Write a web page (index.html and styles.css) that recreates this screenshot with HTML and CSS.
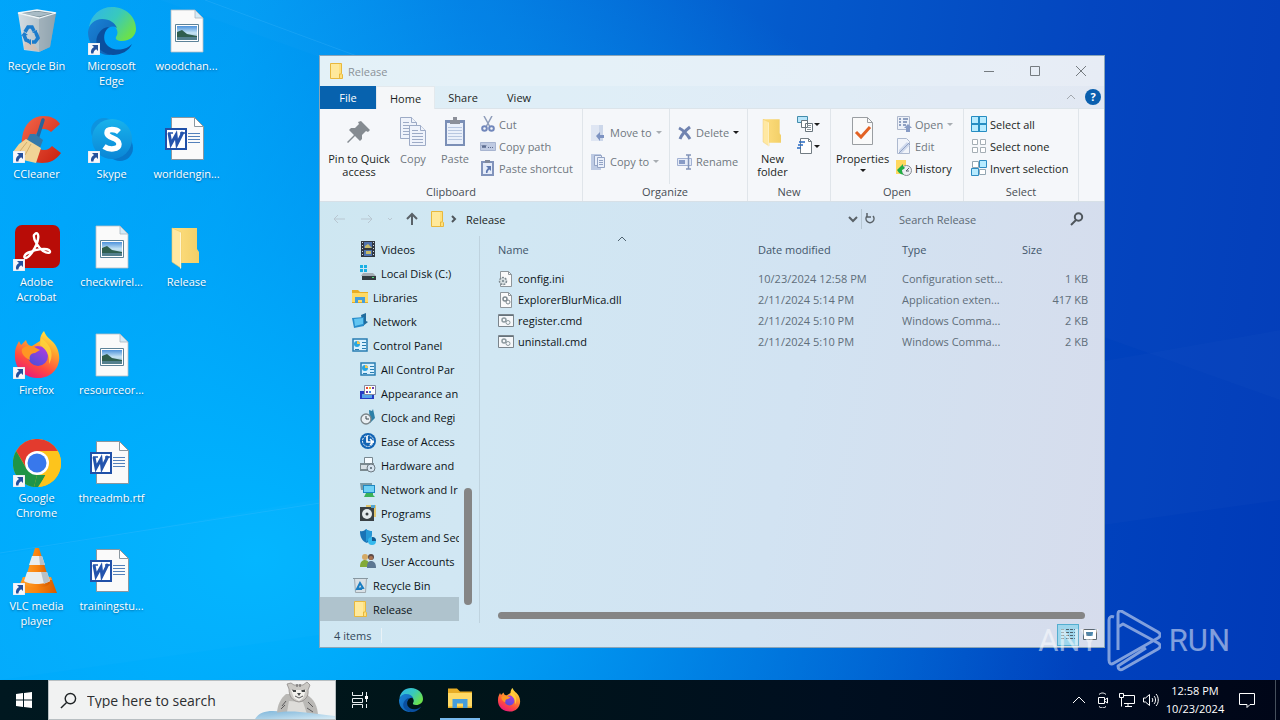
FILE: index.html
```html
<!DOCTYPE html>
<html lang="en">
<head>
<meta charset="utf-8">
<meta name="viewport" content="width=device-width, initial-scale=1">
<title>Release</title>
<link rel="stylesheet" href="styles.css">
</head>
<body>
<svg class="sprite" width="0" height="0" aria-hidden="true">
  <defs>
    <linearGradient id="g-bin" x1="0" x2="1"><stop offset="0" stop-color="#d3dde3"/><stop offset=".6" stop-color="#b5c3ca"/><stop offset="1" stop-color="#76909c"/></linearGradient>
    <linearGradient id="g-edge1" x1="0" y1="0" x2="1" y2=".6"><stop offset="0" stop-color="#2fb4ee"/><stop offset=".55" stop-color="#38c9bd"/><stop offset="1" stop-color="#6be04c"/></linearGradient>
    <linearGradient id="g-edge2" x1="0" y1="0" x2="1" y2="1"><stop offset="0" stop-color="#1b83d6"/><stop offset="1" stop-color="#0c5eb0"/></linearGradient>
    <linearGradient id="g-cc" x1="0" y1="0" x2="1" y2="1"><stop offset="0" stop-color="#f4674b"/><stop offset="1" stop-color="#c8200f"/></linearGradient>
    <linearGradient id="g-sky" x1="0" y1="0" x2="0" y2="1"><stop offset="0" stop-color="#18b2ec"/><stop offset="1" stop-color="#0a86d6"/></linearGradient>
    <linearGradient id="g-fold" x1="0" x2="1"><stop offset="0" stop-color="#ffdf80"/><stop offset="1" stop-color="#f2cf68"/></linearGradient>
    <linearGradient id="g-fox" x1=".8" y1="0" x2=".3" y2="1"><stop offset="0" stop-color="#fff04a"/><stop offset=".35" stop-color="#ffa22e"/><stop offset=".7" stop-color="#ff4b40"/><stop offset="1" stop-color="#e8187c"/></linearGradient>
    <linearGradient id="g-globe" x1=".8" y1="0" x2=".2" y2="1"><stop offset="0" stop-color="#b03be0"/><stop offset="1" stop-color="#4b4fd8"/></linearGradient>
    <linearGradient id="g-cone" x1="0" x2="1"><stop offset="0" stop-color="#ffa02a"/><stop offset=".5" stop-color="#f98410"/><stop offset="1" stop-color="#d55b00"/></linearGradient>
    <linearGradient id="g-pic" x1="0" y1="0" x2="0" y2="1"><stop offset="0" stop-color="#4d92dc"/><stop offset=".5" stop-color="#c6e4f4"/><stop offset="1" stop-color="#7da6ba"/></linearGradient>
    <linearGradient id="g-snow" x1="0" y1="0" x2="1" y2="1"><stop offset="0" stop-color="#7fb6da"/><stop offset="1" stop-color="#d8ecf6"/></linearGradient>
  </defs>

  <symbol id="i-arrow" viewBox="0 0 12 12"><path fill="#f6f7fb" stroke="#c9d2e0" stroke-width=".5" d="M0 0h12v12H0z"/><path fill="#24509c" d="M4 2h6v6L8.200 6.200C6.500 7.200 5.500 8.500 5.400 10.500H3.200C2.400 7.500 3.500 5.500 6 4z"/></symbol>

  <symbol id="i-recycle" viewBox="0 0 48 48"><path fill="url(#g-bin)" d="M5 6l6 37 15 2 11-5 6-34-17 5z"/><path fill="#98aab4" d="M26 11l17-5-6 34-11 5z" opacity=".75"/><path fill="#6f8792" d="M5 6l19-3 19 3-17 5z"/><path fill="#a9bcc6" d="M9 6.500L24 4.500l14 2-12 3z"/><path fill="none" stroke="#f1f6f8" stroke-width="1.300" d="M5 6l19-3 19 3-17 5z"/><path fill="#e3b79c" opacity=".5" d="M12 34l8 2 6 8-15-2z"/><g fill="none" stroke="#1b7ccc" stroke-width="3.600"><path d="M12 25l3-5 4 0 2 4"/><path d="M23 26l2 5-3 4h-3"/><path d="M16 34l-3-1-2-5"/></g><path fill="#1b7ccc" d="M19 25l5-2v5zM18 32v6l-4-3zM8 29l3-4 4 3z"/></symbol>

  <symbol id="i-edge" viewBox="0 0 48 48"><path fill="url(#g-edge1)" d="M1 20C3 8 12 0 24 0c14 0 24 10 24 22 0 7-6 12-14 12-5 0-7-2-6-4 2-3 2-6 0-9-3-5-9-8-16-7-5 0-9 3-11 6z"/><path fill="url(#g-edge2)" d="M0 25C1 17 7 12 14 12c8 0 13 4 15 9-4-3-9-1-12 4-4 8-1 17 6 23C10 49 0 38 0 25z"/><path fill="#0a4f9f" d="M21 20c-4 3-6 9-4 15 3 6 10 9 18 7 5-1 8-4 9-5-3 7-11 11-19 11C14 47 6 39 9 30c2-6 7-10 12-10z"/></symbol>

  <symbol id="i-image" viewBox="0 0 48 48"><path fill="#fafafa" stroke="#b8bec4" stroke-width=".8" d="M8 3h24l8 8v34H8z"/><path fill="#d5eaf6" stroke="#aab6c0" stroke-width=".8" d="M32 3v8h8z"/><path fill="#fff" stroke="#5d8298" d="M12.500 17.500h23v17h-23z"/><path fill="url(#g-pic)" d="M14 19h20v14H14z"/><path fill="#2f5e4e" d="M14 25l5-2 5 4 10 2v1H14z"/><path fill="#537f8d" d="M14 30h20v3H14z"/></symbol>

  <symbol id="i-ccleaner" viewBox="0 0 48 48"><path fill="url(#g-cc)" d="M47 9l-9 8c-5-5-13-4-15 3-3 8 2 15 8 15 4 0 6-2 8-4l9 7c-5 7-11 10-19 10-13 0-22-11-20-25C11 8 20 1 31 1c7 0 13 3 16 8z"/><path fill="none" stroke="#28659c" stroke-width="3.500" stroke-linecap="round" d="M30 5l-6 19"/><path fill="#3479aa" d="M17 19l5 0 8 6-3 8-12-3-1-5z"/><path fill="#f1d496" d="M13 24l-7 5-6 8 10 8 13 3 5-15z"/><path stroke="#d3ae6c" fill="none" d="M14 27l-7 9M18 29l-6 11"/></symbol>

  <symbol id="i-skype" viewBox="0 0 48 48"><circle cx="16" cy="16" r="13" fill="#0d93df"/><circle cx="32" cy="33" r="13" fill="#0878ca"/><circle cx="24" cy="24" r="20" fill="url(#g-sky)"/><path fill="none" stroke="#fff" stroke-width="5.500" d="M31 17c-3-3-12-4-12 1 0 6 12 4 12 11 0 6-10 6-15 2.500"/></symbol>

  <symbol id="i-word" viewBox="0 0 48 48"><path fill="#fafafa" stroke="#8b979f" d="M8.500 2.500h23l9 9v33h-32z"/><path fill="#fff" stroke="#8b979f" d="M31.500 2.500v9h9z"/><path stroke="#5481bb" d="M25 18.500h12M25 21.500h12M25 24.500h12M25 27.500h12"/><path fill="#fff" stroke="#2050a8" stroke-width="2" d="M3 14h20v20H3z"/><path fill="none" stroke="#2454ad" stroke-width="3" d="M6 18l2 11 5-9 1 9 6-12"/><path stroke="#2454ad" stroke-width="1.500" d="M5 18h5M17 18h5"/></symbol>

  <symbol id="i-acrobat" viewBox="0 0 48 48"><rect x="2" y="2" width="45" height="43" rx="7" fill="#b80c07"/><path fill="none" stroke="#fff" stroke-width="2.400" stroke-linejoin="round" d="M22 11c2-2 4 0 3 5-1 7-8 18-12 19-3 0-2-4 4-6 7-3 16-4 19-2 3 3-1 4-6 1-5-4-10-12-9-16z"/></symbol>

  <symbol id="i-folder-lg" viewBox="0 0 48 48"><path fill="url(#g-fold)" d="M9 5h25v21l2 3v11H17z"/><path fill="#ffe8a2" stroke="#edc865" stroke-width=".6" d="M9 5l9 4v36l-9-6z"/><path fill="#fff6d0" d="M17 9v36l1 1V10z"/></symbol>

  <symbol id="i-firefox" viewBox="0 0 48 48"><path fill="url(#g-fox)" d="M27 10c0-5 2-8 4-10 3 8 9 9 12 15 9 16-2 32-17 32C11 47 1 37 2 23c0-6 2-9 4-13l2 4 5-5c1 4 3 6 6 6z"/><circle cx="25" cy="25" r="10" fill="url(#g-globe)"/><path fill="#ff9623" d="M9 18c4-4 10-4 14-1l4 2-5 3c-5 0-6 4-5 7-7-3-9-8-8-11z"/><path fill="#ffd43c" d="M28 7c9 6 14 16 8 26 1-9-3-15-9-19z" opacity=".8"/></symbol>

  <symbol id="i-chrome" viewBox="0 0 48 48"><circle cx="24" cy="24" r="24" fill="#fdc41c"/><path fill="#e33b2e" d="M3.200 12a24 24 0 0 1 41.600 0H24l-10 18z"/><path fill="#1f9447" d="M3.200 12l10.500 18L24 36l-3 12A24 24 0 0 1 3.200 12z"/><path fill="#1f9447" d="M24 36h9l-8 12h-4z"/><path fill="#fdc41c" d="M44.800 12A24 24 0 0 1 26 48l9-17-2-19z"/><circle cx="24" cy="24" r="12" fill="#fff"/><circle cx="24" cy="24" r="9.500" fill="#3878ec"/></symbol>

  <symbol id="i-vlc" viewBox="0 0 48 48"><path fill="url(#g-cone)" d="M10 30h28l6 16H3z"/><path fill="#fb9c2f" d="M10 30h28l1 3H9z"/><path fill="url(#g-cone)" d="M22 1h4l11 35c-3 6-23 6-26 0z"/><path fill="#e9edef" d="M19 9h10l3 9H16zM14 25h20l3 9c-5 4-21 4-26 0z"/><path fill="#b9c1c7" d="M26 9h3l3 9h-5zM28 25h6l3 9-6 3z"/></symbol>

  <symbol id="i-folder" viewBox="0 0 16 16"><path fill="#ffe07c" stroke="#e8b83d" d="M2.500.500h11v10l1 1v4h-12z"/><path fill="#ffeeb0" d="M3 1h8v14H3z" opacity=".6"/><path fill="none" stroke="#e8b83d" d="M11.500 15v-4h2"/></symbol>

  <symbol id="i-pin" viewBox="0 0 24 24"><path fill="#858b91" d="M14 1l9 9-2 2-2-1-4 4 0 4-2 2-5-5-7 7-1-1 7-7-5-5 2-2h4l4-4-1-2z"/></symbol>
  <symbol id="i-copy" viewBox="0 0 26 32"><g fill="#eff3fb" stroke="#9dabc6"><path d="M.500 1.500h11l5 5v16H.500z"/><path d="M11.500 1.500v5h5M3 6.500h6M3 9.500h11M3 12.500h11M3 15.500h11M3 18.500h11"/><path d="M9.500 9.500h11l5 5v15h-16z"/><path d="M20.500 9.500v5h5M12 14.500h6M12 17.500h11M12 20.500h11M12 23.500h11M12 26.500h11"/></g></symbol>
  <symbol id="i-paste" viewBox="0 0 24 32"><path fill="#7b8fb6" d="M2 4h20v26H2z"/><path fill="#eaf0fa" d="M4 7h16v21H4z"/><path stroke="#b8c7e0" d="M5 11.500h14M5 14.500h14M5 17.500h14M5 20.500h14M5 23.500h14"/><path fill="#8c9099" d="M7 4h3V1h4v3h3v4H7z"/></symbol>
  <symbol id="i-cut" viewBox="0 0 16 16"><path fill="none" stroke="#8e9cb9" stroke-width="1.500" d="M4 0l6 11M12 0L6 11"/><g fill="none" stroke="#7187bb" stroke-width="2"><circle cx="4.500" cy="12.500" r="2.300"/><circle cx="11.500" cy="12.500" r="2.300"/></g></symbol>
  <symbol id="i-path" viewBox="0 0 16 16"><path fill="#bfcae2" stroke="#a7b4d0" d="M.500 4.500h15v8H.500z"/><path fill="none" stroke="#5d6d91" d="M2 7l1 3 1-3 1 3 1-3M8 9.500h1M10 9.500h1M12 9.500h1"/></symbol>
  <symbol id="i-shortcut" viewBox="0 0 16 16"><path fill="#e5ecf9" stroke="#8193bb" stroke-width="2" d="M2 2h11v13H2z"/><path fill="#81899b" d="M5 0h5v3H5z"/><path fill="#5f79b0" d="M6 6h5v5L9.500 9.500C8 10.500 7.500 11.500 7.500 13H6c-.5-2 .5-3.500 2-5z"/></symbol>
  <symbol id="i-moveto" viewBox="0 0 16 16"><path fill="#ccd7ea" d="M0 0h12v16H0z"/><path fill="#dfe6f3" d="M0 0h8v16H0z"/><path fill="#7d93c2" d="M5 11l4-4v3h4v3H9v3z"/></symbol>
  <symbol id="i-copyto" viewBox="0 0 16 16"><path fill="#bdcae3" d="M0 0h10v16H0z"/><path fill="#e9effa" stroke="#93a3c4" d="M3.500 1.500h7v10h-7z"/><path fill="#e9effa" stroke="#93a3c4" d="M6.500 3.500h7v10h-7zM8 6.500h4M8 8.500h4M8 10.500h4"/></symbol>
  <symbol id="i-delete" viewBox="0 0 16 16"><path fill="none" stroke="#7083b0" stroke-width="3" d="M2 3c4 2 8 6 11 11M13 2C9 5 5 9 3 14"/></symbol>
  <symbol id="i-rename" viewBox="0 0 16 16"><path fill="#e5ebf7" stroke="#a2b1d2" d="M.500 4.500h14v7H.500z"/><path fill="#889bc5" d="M2 6h6v4H2z"/><path fill="none" stroke="#8294b9" stroke-width="1.500" d="M9 1h5M11.500 1v14M9 15h5"/></symbol>
  <symbol id="i-newitem" viewBox="0 0 16 16"><path fill="#b9e6fb" stroke="#438dac" d="M.500.500h10v6H.500z"/><path fill="#fff" stroke="#68757d" d="M4.500 4.500h6v7h-6zM8.500 7.500h7v8h-7z"/><path stroke="#8b979e" d="M10 9.500h4M10 11.500h4M10 13.500h4"/></symbol>
  <symbol id="i-easy" viewBox="0 0 16 16"><path fill="#fff" stroke="#727c83" d="M3.500.500h8l3 3v12h-11z"/><path fill="none" stroke="#727c83" d="M11.500.500v3h3"/><path stroke="#286bc2" stroke-width="1.500" d="M2 4h6M1 7h5M0 10h4"/></symbol>
  <symbol id="i-props" viewBox="0 0 24 32"><path fill="#fafafa" stroke="#9a9ea2" d="M1.500 1.500h15l5 5v22h-20z"/><path fill="none" stroke="#9a9ea2" d="M16.500 1.500v5h5"/><path fill="none" stroke="#e36224" stroke-width="3" d="M5 16l5 5 9-10"/></symbol>
  <symbol id="i-open" viewBox="0 0 16 16"><path fill="#edf1f8" stroke="#aeb8cc" d="M1.500.500h12v13h-12z"/><path stroke="#8fa0c0" stroke-width="2" d="M3 3h2M3 6h2M3 9h2M7 3h5M7 6h4M7 9h3"/><path fill="#889cc5" d="M8 12l4-4 4 4h-2v4h-4v-4z"/></symbol>
  <symbol id="i-edit" viewBox="0 0 16 16"><path fill="#f1f4fa" stroke="#adb9cf" d="M1.500.500h9l3 3v12h-12z"/><path fill="#cdd7eb" d="M3 12l8-8 3 3-8 8H3z"/><path fill="none" stroke="#92a3c6" d="M3 15l9-9M12 5l2 2"/></symbol>
  <symbol id="i-history" viewBox="0 0 16 16"><path fill="#ffd85f" d="M0 0h10v14H0z"/><circle cx="10.500" cy="10.500" r="5" fill="#ededf3" stroke="#858b92"/><path fill="none" stroke="#57626b" d="M13 8l-3 3h3"/><path fill="#21ae45" d="M1 10l6-6v3c3 0 2 2-1 3 0 3 1 4 2 5-4-1-5-2-7-5z"/></symbol>
  <symbol id="i-selall" viewBox="0 0 16 16"><path fill="#b7ebff" stroke="#268dc2" d="M.500.500h15v15H.500z"/><path stroke="#268dc2" stroke-width="2" d="M1 8h14M8 1v14" /></symbol>
  <symbol id="i-selnone" viewBox="0 0 16 16"><path fill="#fff" stroke="#a5aeb5" d="M1.500 1.500h5v5h-5zM9.500 1.500h5v5h-5zM1.500 9.500h5v5h-5zM9.500 9.500h5v5h-5z"/></symbol>
  <symbol id="i-selinv" viewBox="0 0 16 16"><path fill="#fff" stroke="#93a6b2" d="M1.500 1.500h6v6h-6zM8.500 9.500h6v5h-6z"/><path fill="#b7ebff" stroke="#2e8cc3" d="M8.500.500h7v7h-7zM.500 8.500h7v7h-7z"/></symbol>

  <symbol id="i-videos" viewBox="0 0 16 16"><path fill="#303740" d="M1 0h14v16H1z"/><path fill="#4e72ac" d="M4 1h8v6H4zM4 9h8v6H4z"/><path fill="#c6ba69" d="M5 5l3-2 4 4H5zM6 10h5v3H6z"/><path stroke="#d2dee8" stroke-dasharray="1 2" d="M2.500 1v15M13.500 1v15"/></symbol>
  <symbol id="i-disk" viewBox="0 0 16 16"><path fill="#19b0e4" d="M0 0h3v3H0zM4 0h3v3H4zM0 4h3v3H0zM4 4h3v3H4z"/><path fill="#a4adb4" d="M3 8h10l3 3H1z"/><path fill="#323b40" d="M2 11h14v4H2z"/><path fill="#53e27b" d="M12 12h2v1h-2z"/></symbol>
  <symbol id="i-lib" viewBox="0 0 16 16"><path fill="#e8ad25" d="M0 1h6l2 2h8v11H0z"/><path fill="#ffda65" d="M0 4h16v9H0z"/><path fill="#469edb" d="M3 14V8h10v6h-3v-3H6v3z"/></symbol>
  <symbol id="i-network" viewBox="0 0 16 16"><path fill="#226c9c" d="M9 2l5-2v8l2 1-5 4z"/><path fill="#278cca" d="M0 5l12-1v9L2 15z"/><path fill="#62c5f1" d="M2 6l9-1v6l-8 2z"/></symbol>
  <symbol id="i-control" viewBox="0 0 16 16"><path fill="#d8f1ff" stroke="#297eb2" stroke-width="1.500" d="M1 2h14v12H1z"/><circle cx="5" cy="7" r="3" fill="#28a5e0"/><path fill="#f4c64e" d="M5 4a3 3 0 0 1 3 3H5z"/><path stroke="#297eb2" d="M10 5.500h4M10 8.500h4M3 12.500h4M10 11.500h4"/></symbol>
  <symbol id="i-appear" viewBox="0 0 16 16"><path fill="#263bc2" d="M0 6h14v8H0z"/><path fill="#55a3ea" d="M2 9h10v4H2z"/><path fill="#fff" stroke="#858ba0" d="M4.500.500h11v9h-11z"/><path fill="#e84835" d="M6 2h2v2H6z"/><path fill="#edb92c" d="M9 2h2v2H9z"/><path fill="#6b3cab" d="M12 2h2v2h-2zM6 6h2v2H6z"/><path fill="#4787de" d="M9 6h2v2H9z"/></symbol>
  <symbol id="i-clock" viewBox="0 0 16 16"><path fill="#2c80a8" d="M9 1l3 1 1-2 2 9-5 5z"/><circle cx="6" cy="10" r="5" fill="#e9eff3" stroke="#7b8589" stroke-width="1.300"/><path fill="none" stroke="#39464c" d="M6 7v3h3"/></symbol>
  <symbol id="i-ease" viewBox="0 0 16 16"><circle cx="8" cy="8" r="8" fill="#1264b4"/><circle cx="8" cy="8" r="5.500" fill="none" stroke="#fff" stroke-dasharray="2 1"/><path fill="none" stroke="#fff" stroke-width="1.700" d="M7 3v6h6M10 6l3 3-3 3"/></symbol>
  <symbol id="i-hard" viewBox="0 0 16 16"><path fill="#f5fbff" stroke="#788890" d="M4.500.500h8v7h-8z"/><path fill="#7b8a90" d="M0 6h14v8H0z"/><path fill="#d8e0e5" d="M1 8h12v4H1z"/><circle cx="11" cy="11" r="4" fill="#d7e4ef" stroke="#6c7880"/><circle cx="11" cy="11" r="1" fill="#50606a"/></symbol>
  <symbol id="i-netint" viewBox="0 0 16 16"><path fill="#7a9ba7" d="M0 2h12v7H1z"/><path fill="#1d88c2" d="M3 4h12v8H3z"/><path fill="#70d1f6" d="M4 5h10v6H4z"/><path fill="#3bb158" d="M6 12h7v2l2 2H4z"/></symbol>
  <symbol id="i-prog" viewBox="0 0 16 16"><path fill="#e1c66f" d="M6 0h10v12H6z"/><path fill="#394044" d="M0 2h14v14H0z"/><circle cx="7" cy="9" r="5" fill="#e4eaed"/><circle cx="7" cy="9" r="1.500" fill="#394044"/><path fill="#53a4d0" d="M11 0h4v3h-4z"/></symbol>
  <symbol id="i-system" viewBox="0 0 16 16"><path fill="#1973b6" d="M0 2c3 1 5-1 6-2 2 2 4 2 6 2 0 6-1 9-5 12C2 12 0 8 0 2z"/><path fill="#2598d7" d="M6 0c2 2 4 2 6 2 0 5-1 8-6 11z"/><circle cx="12" cy="12" r="4" fill="#35b9ed"/><path fill="#17588d" d="M12 8a4 4 0 0 1 4 4h-4z"/></symbol>
  <symbol id="i-users" viewBox="0 0 16 16"><circle cx="5" cy="4" r="3" fill="#d4aa65"/><path fill="#83aa38" d="M0 14c0-5 2-7 5-7s5 3 5 7z"/><circle cx="11" cy="4" r="3" fill="#5d4b48"/><circle cx="11" cy="5" r="2" fill="#aa7350"/><path fill="#5c7792" d="M7 15c0-5 1-7 4-7s5 2 5 7z"/></symbol>
  <symbol id="i-bin" viewBox="0 0 16 16"><path fill="#d8e0e5" stroke="#9faab1" d="M2.500 1.500h12l-1 14h-10z"/><path fill="none" stroke="#8797a0" d="M1 1.500h15"/><path fill="none" stroke="#1a7ec2" stroke-width="2" d="M5 12l3-6 3 5zM5 12h5"/></symbol>
  <symbol id="i-ini" viewBox="0 0 16 16"><path fill="#fafafa" stroke="#8f969b" d="M2.500.500h8l3 3v12h-11z"/><path fill="none" stroke="#8f969b" d="M10.500.500v3h3"/><circle cx="5" cy="10" r="3.500" fill="#d8dfe1" stroke="#7e898f" stroke-width="1.500" stroke-dasharray="2 1"/><circle cx="5" cy="10" r="1" fill="#718087"/></symbol>
  <symbol id="i-dll" viewBox="0 0 16 16"><path fill="#fafafa" stroke="#8f969b" d="M2.500.500h8l3 3v12h-11z"/><path fill="none" stroke="#8f969b" d="M10.500.500v3h3"/><circle cx="7" cy="7" r="2" fill="none" stroke="#7e898f" stroke-width="1.500"/><circle cx="10" cy="10" r="2" fill="none" stroke="#7e898f"/></symbol>
  <symbol id="i-cmd" viewBox="0 0 16 16"><path fill="#f5f7f9" stroke="#7b858c" d="M.500 1.500h15v12H.500z"/><path stroke="#65727b" d="M1 2.500h14"/><circle cx="6" cy="7" r="2" fill="none" stroke="#8d9a9f" stroke-width="1.500"/><circle cx="10" cy="9.500" r="2" fill="none" stroke="#8d9a9f"/></symbol>
</svg>

<main class="desktop">
  <svg class="wallpaper" viewBox="0 0 1280 680" preserveAspectRatio="none" aria-hidden="true">
    <path fill="#fff" opacity=".015" d="M160 0L1280 400V0z"/>
    <path fill="#fff" opacity=".015" d="M0 555L1280 330V500L0 680z"/>
    <path fill="none" stroke="#5bc5ff" opacity=".2" d="M205 0l190 70M0 553l320-50"/>
  </svg>
  <ul class="icons">
    <li><a class="shortcut" href="#"><span class="pic"><svg><use href="#i-recycle"/></svg></span><span>Recycle Bin</span></a></li>
    <li><a class="shortcut" href="#"><span class="pic"><svg><use href="#i-ccleaner"/></svg><svg class="link"><use href="#i-arrow"/></svg></span><span>CCleaner</span></a></li>
    <li><a class="shortcut" href="#"><span class="pic"><svg><use href="#i-acrobat"/></svg><svg class="link"><use href="#i-arrow"/></svg></span><span>Adobe Acrobat</span></a></li>
    <li><a class="shortcut" href="#"><span class="pic"><svg><use href="#i-firefox"/></svg><svg class="link"><use href="#i-arrow"/></svg></span><span>Firefox</span></a></li>
    <li><a class="shortcut" href="#"><span class="pic"><svg><use href="#i-chrome"/></svg><svg class="link"><use href="#i-arrow"/></svg></span><span>Google Chrome</span></a></li>
    <li><a class="shortcut" href="#"><span class="pic"><svg><use href="#i-vlc"/></svg><svg class="link"><use href="#i-arrow"/></svg></span><span>VLC media player</span></a></li>
    <li><a class="shortcut" href="#"><span class="pic"><svg><use href="#i-edge"/></svg><svg class="link"><use href="#i-arrow"/></svg></span><span>Microsoft Edge</span></a></li>
    <li><a class="shortcut" href="#"><span class="pic"><svg><use href="#i-skype"/></svg><svg class="link"><use href="#i-arrow"/></svg></span><span>Skype</span></a></li>
    <li><a class="shortcut" href="#"><span class="pic"><svg><use href="#i-image"/></svg></span><span>checkwirel...</span></a></li>
    <li><a class="shortcut" href="#"><span class="pic"><svg><use href="#i-image"/></svg></span><span>resourceor...</span></a></li>
    <li><a class="shortcut" href="#"><span class="pic"><svg><use href="#i-word"/></svg></span><span>threadmb.rtf</span></a></li>
    <li><a class="shortcut" href="#"><span class="pic"><svg><use href="#i-word"/></svg></span><span>trainingstu...</span></a></li>
    <li><a class="shortcut" href="#"><span class="pic"><svg><use href="#i-image"/></svg></span><span>woodchan...</span></a></li>
    <li><a class="shortcut" href="#"><span class="pic"><svg><use href="#i-word"/></svg></span><span>worldengin...</span></a></li>
    <li><a class="shortcut" href="#"><span class="pic"><svg><use href="#i-folder-lg"/></svg></span><span>Release</span></a></li>
  </ul>

  <section class="window" aria-label="Release">
    <header class="titlebar">
      <svg class="ic"><use href="#i-folder"/></svg>
      <h1>Release</h1>
      <div class="winbtns">
        <button aria-label="Minimize"><svg viewBox="0 0 12 12"><path d="M1 6.500h10"/></svg></button>
        <button aria-label="Maximize"><svg viewBox="0 0 12 12"><path d="M1.500 1.500h9v9h-9z"/></svg></button>
        <button aria-label="Close"><svg viewBox="0 0 12 12"><path d="M1 1l10 10M11 1L1 11"/></svg></button>
      </div>
    </header>
    <nav class="tabs">
      <button class="tab file">File</button><button class="tab current">Home</button><button class="tab">Share</button><button class="tab">View</button>
      <div class="tabs-end">
        <button aria-label="Minimize the Ribbon"><svg width="10" height="10" viewBox="0 0 10 10"><path fill="none" stroke="#a3a8ae" d="M1 7l4-4 4 4"/></svg></button>
        <button class="help" aria-label="Help">?</button>
      </div>
    </nav>

    <div class="ribbon">
      <section class="group clipboard">
        <div class="tools">
          <button class="big pin"><svg class="i24"><use href="#i-pin"/></svg>Pin to Quick access</button>
          <button class="big dim"><svg class="i26"><use href="#i-copy"/></svg>Copy</button>
          <button class="big dim"><svg class="i26"><use href="#i-paste"/></svg>Paste</button>
          <div class="stack dim">
            <button><svg class="ic"><use href="#i-cut"/></svg>Cut</button>
            <button><svg class="ic"><use href="#i-path"/></svg>Copy path</button>
            <button><svg class="ic"><use href="#i-shortcut"/></svg>Paste shortcut</button>
          </div>
        </div>
        <h2>Clipboard</h2>
      </section>
      <section class="group organize">
        <div class="tools">
          <div class="stack loose dim">
            <button><svg class="ic"><use href="#i-moveto"/></svg>Move to<i class="caret"></i></button>
            <button><svg class="ic"><use href="#i-copyto"/></svg>Copy to<i class="caret"></i></button>
          </div>
          <div class="stack loose dim second">
            <button><svg class="ic"><use href="#i-delete"/></svg>Delete<i class="caret dark"></i></button>
            <button><svg class="ic"><use href="#i-rename"/></svg>Rename</button>
          </div>
        </div>
        <h2>Organize</h2>
      </section>
      <section class="group new">
        <div class="tools">
          <button class="big"><svg class="i32"><use href="#i-folder-lg"/></svg>New folder</button>
          <div class="stack tight">
            <button aria-label="New item"><svg class="ic"><use href="#i-newitem"/></svg><i class="caret dark"></i></button>
            <button aria-label="Easy access"><svg class="ic"><use href="#i-easy"/></svg><i class="caret dark"></i></button>
          </div>
        </div>
        <h2>New</h2>
      </section>
      <section class="group open">
        <div class="tools">
          <button class="big"><svg class="i26"><use href="#i-props"/></svg>Properties<i class="caret dark"></i></button>
          <div class="stack">
            <button class="dim"><svg class="ic"><use href="#i-open"/></svg>Open<i class="caret"></i></button>
            <button class="dim"><svg class="ic"><use href="#i-edit"/></svg>Edit</button>
            <button><svg class="ic"><use href="#i-history"/></svg>History</button>
          </div>
        </div>
        <h2>Open</h2>
      </section>
      <section class="group select">
        <div class="tools">
          <div class="stack">
            <button><svg class="ic"><use href="#i-selall"/></svg>Select all</button>
            <button><svg class="ic"><use href="#i-selnone"/></svg>Select none</button>
            <button><svg class="ic"><use href="#i-selinv"/></svg>Invert selection</button>
          </div>
        </div>
        <h2>Select</h2>
      </section>
    </div>

    <div class="address">
      <button aria-label="Back"><svg viewBox="0 0 14 14"><path stroke="#b9c7d1" d="M13 7H2M6 3L2 7l4 4"/></svg></button>
      <button aria-label="Forward"><svg viewBox="0 0 14 14"><path stroke="#b9c7d1" d="M1 7h11M8 3l4 4-4 4"/></svg></button>
      <button class="slim" aria-label="Recent locations"><svg viewBox="0 0 14 14"><path stroke="#b9c7d1" d="M5 6l2 2 2-2"/></svg></button>
      <button aria-label="Up"><svg viewBox="0 0 14 14"><path stroke="#5a6268" stroke-width="2" d="M7 13V2M2 7l5-5 5 5"/></svg></button>
      <svg class="ic place"><use href="#i-folder"/></svg>
      <svg class="chev" viewBox="0 0 8 8"><path d="M2 1l3 3-3 3"/></svg>
      <a href="#">Release</a>
      <div class="address-end">
        <button class="slim" aria-label="Previous locations"><svg viewBox="0 0 14 14"><path stroke="#5a6268" stroke-width="2" d="M3 5l4 4 4-4"/></svg></button>
        <button class="slim refresh" aria-label="Refresh"><svg viewBox="0 0 14 14"><path stroke="#5a6268" stroke-width="1.500" d="M4 4a4 4 0 1 0 6 0M4 1v4h4"/></svg></button>
      </div>
      <label class="find"><input type="search" placeholder="Search Release" aria-label="Search Release"><svg viewBox="0 0 14 14"><circle cx="8.500" cy="5" r="3.700"/><path d="M6 8l-5 5"/></svg></label>
    </div>

    <div class="body">
      <nav class="tree">
        <ul>
          <li class="sub"><a href="#"><svg class="ic"><use href="#i-videos"/></svg>Videos</a></li>
          <li class="sub"><a href="#"><svg class="ic"><use href="#i-disk"/></svg>Local Disk (C:)</a></li>
          <li><a href="#"><svg class="ic"><use href="#i-lib"/></svg>Libraries</a></li>
          <li><a href="#"><svg class="ic"><use href="#i-network"/></svg>Network</a></li>
          <li><a href="#"><svg class="ic"><use href="#i-control"/></svg>Control Panel</a></li>
          <li class="sub"><a href="#"><svg class="ic"><use href="#i-control"/></svg>All Control Par</a></li>
          <li class="sub"><a href="#"><svg class="ic"><use href="#i-appear"/></svg>Appearance an</a></li>
          <li class="sub"><a href="#"><svg class="ic"><use href="#i-clock"/></svg>Clock and Regi</a></li>
          <li class="sub"><a href="#"><svg class="ic"><use href="#i-ease"/></svg>Ease of Access</a></li>
          <li class="sub"><a href="#"><svg class="ic"><use href="#i-hard"/></svg>Hardware and</a></li>
          <li class="sub"><a href="#"><svg class="ic"><use href="#i-netint"/></svg>Network and Ir</a></li>
          <li class="sub"><a href="#"><svg class="ic"><use href="#i-prog"/></svg>Programs</a></li>
          <li class="sub"><a href="#"><svg class="ic"><use href="#i-system"/></svg>System and Sec</a></li>
          <li class="sub"><a href="#"><svg class="ic"><use href="#i-users"/></svg>User Accounts</a></li>
          <li><a href="#"><svg class="ic"><use href="#i-bin"/></svg>Recycle Bin</a></li>
          <li class="selected"><a href="#"><svg class="ic"><use href="#i-folder"/></svg>Release</a></li>
        </ul>
        <div class="vbar"><span></span></div>
      </nav>
      <div class="files">
        <table>
          <colgroup><col><col class="c-date"><col class="c-type"><col class="c-size"></colgroup>
          <thead><tr><th class="sorted">Name<svg viewBox="0 0 10 6"><path d="M1 5l4-4 4 4"/></svg></th><th>Date modified</th><th>Type</th><th>Size</th></tr></thead>
          <tbody>
            <tr><td><span class="name"><svg class="ic"><use href="#i-ini"/></svg>config.ini</span></td><td>10/23/2024 12:58 PM</td><td>Configuration sett...</td><td>1 KB</td></tr>
            <tr><td><span class="name"><svg class="ic"><use href="#i-dll"/></svg>ExplorerBlurMica.dll</span></td><td>2/11/2024 5:14 PM</td><td>Application exten...</td><td>417 KB</td></tr>
            <tr><td><span class="name"><svg class="ic"><use href="#i-cmd"/></svg>register.cmd</span></td><td>2/11/2024 5:10 PM</td><td>Windows Comma...</td><td>2 KB</td></tr>
            <tr><td><span class="name"><svg class="ic"><use href="#i-cmd"/></svg>uninstall.cmd</span></td><td>2/11/2024 5:10 PM</td><td>Windows Comma...</td><td>2 KB</td></tr>
          </tbody>
        </table>
        <div class="hbar"></div>
      </div>
    </div>
    <footer class="status">
      <span class="count">4 items</span>
      <div class="views">
        <button class="on" aria-label="Details view"><svg viewBox="0 0 16 16"><path stroke="#4e626d" stroke-dasharray="3 1" d="M1 2.500h3M1 5.500h3M1 8.500h3M1 11.500h3M6 2.500h9M6 5.500h9M6 8.500h9M6 11.500h9"/></svg></button>
        <button aria-label="Large thumbnails"><svg viewBox="0 0 16 16"><path fill="#fff" stroke="#5d6870" d="M1.500 2.500h13v10h-13z"/><path fill="#5084a6" d="M4 5h7v4H4z"/></svg></button>
      </div>
    </footer>
  </section>

  <div class="watermark">
    <span>ANY</span>
    <svg viewBox="0 0 54 62" aria-hidden="true"><path d="M2 50V10c0-3 2-4 5-3M2 50c0 4 2 5 5 3l44-25c3-2 3-4 0-6L16 2c-3-2-5-1-5 2v36M11 17l5-3 35 19c3 2 3 4 0 6L16 59c-3 2-5 0-5-3l28-18"/></svg>
    <span>RUN</span>
  </div>
</main>

<footer class="taskbar">
  <button class="start" aria-label="Start"><svg viewBox="0 0 16 16"><path fill="#fff" d="M0 2l7-1v6.500H0zM8 1l8-1v7.500H8zM0 8.500h7V15l-7-1zM8 8.500h8V16l-8-1z"/></svg></button>
  <label class="search">
    <svg class="glass" viewBox="0 0 18 18"><circle cx="11" cy="7" r="5.500"/><path d="M7 11l-6 6"/></svg>
    <input type="search" placeholder="Type here to search" aria-label="Type here to search">
    <svg class="tiger" viewBox="0 0 80 38" aria-hidden="true"><path fill="url(#g-snow)" d="M0 38c5-8 15-9 28-7l52 7z"/><path fill="#b9b8b5" d="M22 33c0-9 4-16 9-20h20c8 5 12 12 12 23-8 2-28 3-41-3z"/><path fill="#dddcd9" d="M34 20l14 1 4 12-12 3-8-5z"/><path fill="#cbc9c5" stroke="#85817f" stroke-width=".7" d="M34 8l-2-5 4-1 3 2h9l4-3 3 3-2 5c1 6-3 11-9 12-7-1-10-6-10-13z"/><path fill="#f2f1ed" d="M36 9h15l-3 8-4 3-5-3z"/><path fill="none" stroke="#5c5b5c" d="M37 9l4 1M50 9l-4 1M40 15l4 2 4-2M42 3v3M45 3v3M31 20l-4 5M30 24l-4 4M53 21l5 5M52 27l6 4"/><path fill="#454848" d="M42 12h4l-2 3zM38 9h3v2h-3zM47 9h3v2h-3z"/><path fill="url(#g-snow)" d="M8 36c22-10 41-4 72-1v3H5z"/></svg>
  </label>
  <button class="app" aria-label="Task View"><svg viewBox="0 0 18 18"><path fill="none" stroke="#e8eef0" d="M1.500 1v3.500h10V1M1.500 7.500h10v4h-10zM1.500 17v-3.500h10V17M15.500 1v10M15.500 13v4"/><path fill="#fff" d="M14 5h3v3h-3z"/></svg></button>
  <button class="app gap" aria-label="Microsoft Edge"><svg class="l"><use href="#i-edge"/></svg></button>
  <button class="app gap active" aria-label="File Explorer"><svg class="l"><use href="#i-lib"/></svg></button>
  <button class="app gap" aria-label="Firefox"><svg class="l"><use href="#i-firefox"/></svg></button>
  <div class="tray">
    <button aria-label="Show hidden icons"><svg viewBox="0 0 16 16"><path d="M2 11l6-6 6 6"/></svg></button>
    <button aria-label="Meet Now"><svg viewBox="0 0 16 16"><path d="M3.500 5.500h6v6h-6zM9.500 8l3-2v5l-3-2M4 2.500c2-2 5-2 7 0M4 14.500c2 2 5 2 7 0"/></svg></button>
    <button aria-label="Network"><svg viewBox="0 0 16 16"><path d="M4 3.500h11.500v8H5M9 11.500v3M6 14.500h7M.500 1.500h4v4h-4zM2.500 5.500v9"/></svg></button>
    <button aria-label="Volume"><svg viewBox="0 0 16 16"><path d="M.500 6v4h2l4 3.500v-11L2.500 6zM9 6c1 1 1 3 0 4M11 4c2 2 2 6 0 8M13 2c3 3 3 9 0 12"/></svg></button>
    <button class="clock"><span>12:58 PM</span><span>10/23/2024</span></button>
    <button class="note" aria-label="Notifications"><svg viewBox="0 0 16 16"><path d="M.500 1.500h15v11H11l-3 3v-3H.500z"/></svg></button>
    <button class="peek" aria-label="Show desktop"></button>
  </div>
</footer>
</body>
</html>
```
FILE: styles.css
```css
*, *::before, *::after { box-sizing: border-box; }

body {
  margin: 0;
  min-height: 100vh;
  display: flex;
  flex-direction: column;
  font: 11px/15px "Open Sans", "Noto Sans", sans-serif;
  color: #1b1f23;
}

button, input { font: inherit; color: inherit; background: none; border: 0; padding: 0; margin: 0; }
a { color: inherit; text-decoration: none; }
ul { list-style: none; margin: 0; padding: 0; }
h1, h2 { margin: 0; font: inherit; }
svg { display: block; flex: none; }
.sprite { position: absolute; }
.ic { width: 16px; height: 16px; }

/* Desktop */
.desktop {
  position: relative;
  flex: 1;
  overflow: hidden;
  background:
    radial-gradient(ellipse 65% 100% at 20% 82%, #00b5ff 0%, #00acfd99 45%, #009cf000 100%),
    linear-gradient(97deg, #00a4fa 0%, #0099f2 18%, #007ae2 34%, #0058cc 58%, #0044bf 80%, #003ab8 100%);
}
.wallpaper { position: absolute; inset: 0; width: 100%; height: 100%; }

.icons {
  position: relative;
  display: grid;
  grid-template-rows: repeat(6, 108px);
  grid-auto-columns: 75px;
  grid-auto-flow: column;
  justify-content: start;
  padding-top: 7px;
  margin-left: -1px;
}
.shortcut { display: flex; flex-direction: column; align-items: center; gap: 3px; color: #fff; text-align: center; text-shadow: 0 1px 2px #00406e99; }
.pic { position: relative; width: 48px; height: 48px; }
.pic svg { width: 48px; height: 48px; }
.pic .link { position: absolute; left: 0; bottom: 0; width: 12px; height: 12px; }

/* Explorer window */
.window {
  position: absolute;
  inset: 55px 175px 32px 319px;
  display: flex;
  flex-direction: column;
  border: 1px solid #8aa5b8;
  background: linear-gradient(100deg, #cee7f1 0%, #d1e7f3 25%, #d2e3f2 60%, #d6dcec 100%);
}
.titlebar { display: flex; align-items: center; height: 30px; padding-left: 8px; gap: 4px; background: #ffffff70; color: #8b9298; }
.winbtns { display: flex; margin-left: auto; }
.winbtns button { width: 46px; height: 30px; display: grid; place-items: center; }
.winbtns svg { width: 12px; height: 12px; fill: none; stroke: #757b80; }

.tabs { display: flex; height: 23px; background: #ffffff50; border-bottom: 1px solid #dce4ea; }
.tab { height: 23px; padding: 0 13px; min-width: 56px; }
.tab.file { background: #0762ae; color: #fff; }
.tab.current { background: #f5f7f9; min-width: 58px; border: 1px solid #e3e9ed; border-bottom: 0; }
.tabs-end { display: flex; align-items: center; gap: 9px; margin-left: auto; padding-right: 3px; }
.help { width: 16px; height: 16px; border-radius: 50%; background: #0a5fae; color: #fff; font-weight: 700; line-height: 16px; }

.ribbon { display: flex; height: 93px; background: #f5f7fa; border-bottom: 1px solid #d7e0e7; }
.group { display: flex; flex-direction: column; border-right: 1px solid #e0e5ea; }
.group h2 { text-align: center; line-height: 16px; color: #474d54; }
.tools { display: flex; height: 75px; }
.big { display: flex; flex-direction: column; align-items: center; width: 42px; padding-top: 7px; line-height: 13px; }
.big svg { margin-bottom: 4px; height: 32px; }
.big .caret { margin: 4px 0 0; }
.big.pin { width: 66px; }
.i24 { width: 24px; }
.i26 { width: 26px; }
.i32 { width: 34px; }
.dim { color: #70777f; }
.stack { display: grid; grid-auto-rows: 22px; align-content: start; padding-top: 4px; }
.stack button { display: flex; align-items: center; gap: 3px; white-space: nowrap; }
.stack.loose { grid-auto-rows: 29px; padding-top: 9px; }
.stack.tight button { gap: 0; }
.caret { border: 3px solid transparent; border-top-color: #a8adb2; border-bottom: 0; margin-left: 1px; }
.caret.dark { border-top-color: #1c1c1c; }
.clipboard { width: 263px; }
.clipboard .tools { padding-left: 6px; }
.clipboard .stack { padding-left: 4px; }
.organize { width: 165px; }
.organize .stack { padding-left: 8px; width: 86px; }
.organize .second { border-left: 1px solid #dfe5ea; padding-left: 7px; width: 78px; }
.new { width: 83px; }
.new .big { width: 49px; padding-inline: 6px; }
.new .big svg { margin-inline: -3px; }
.open { width: 133px; }
.open .big { width: 63px; }
.open .stack { padding-left: 2px; }
.select { width: 115px; }
.select .stack { padding-left: 7px; }

.address { display: flex; align-items: center; height: 34px; padding-left: 5px; }
.address button { width: 28px; display: grid; place-items: center; }
.address button.slim { width: 17px; }
.address button svg, .find svg { width: 14px; height: 14px; fill: none; }
.place { margin-left: 3px; }
.chev { width: 8px; height: 8px; margin: 0 8px 0 5px; fill: none; stroke: #4f565c; stroke-width: 2; }
.address-end { display: flex; margin-left: auto; }
.address .refresh { border-left: 1px solid #b8c8d4; height: 20px; width: 19px; }
.find { display: flex; align-items: center; width: 226px; padding: 0 20px 0 21px; }
.find input { flex: 1; min-width: 0; outline: 0; }
.find input::placeholder { color: #5c6974; opacity: 1; }
.find svg { stroke: #4f565c; stroke-width: 2; }

.body { display: flex; flex: 1; min-height: 0; }
.tree { display: flex; width: 160px; border-right: 1px solid #bfd3df; color: #0c1418; }
.tree ul { width: 139px; overflow: hidden; padding-top: 1px; }
.tree a { display: flex; align-items: center; gap: 5px; height: 24px; padding-left: 32px; white-space: nowrap; overflow: hidden; }
.tree .sub a { padding-left: 40px; }
.tree .selected { background: #afc3cd; }
.vbar { display: flex; align-items: flex-end; padding: 0 7px 18px 5px; }
.vbar span { width: 8px; height: 117px; border-radius: 4px; background: #858585; }

.files { flex: 1; display: flex; flex-direction: column; padding: 0 16px 4px 18px; min-width: 0; }
table { width: 100%; table-layout: fixed; border-collapse: collapse; }
th, td { padding: 0; height: 21px; text-align: left; font-weight: 400; white-space: nowrap; color: #606e7a; }
th { position: relative; height: 32px; padding-bottom: 5px; color: #42566a; }
.c-date { width: 144px; }
.c-type { width: 120px; }
.c-size { width: 66px; }
td:last-child { text-align: right; }
.name { display: flex; align-items: center; gap: 4px; color: #0c1418; }
.sorted svg { position: absolute; top: 0; left: 119px; width: 10px; height: 6px; fill: none; stroke: #4f6270; }
.hbar { margin: auto 3px 0 0; height: 7px; border-radius: 4px; background: #858585; }

.status { display: flex; align-items: center; height: 24px; padding-left: 14px; color: #33475a; }
.count { padding-right: 10px; border-right: 1px solid #e9f2f7; }
.views { display: flex; margin-left: auto; padding-right: 3px; }
.views button { width: 22px; height: 22px; display: grid; place-items: center; border: 1px solid transparent; }
.views .on { background: #9fd6ec; border-color: #54aed0; }
.views svg { width: 16px; height: 16px; }

.watermark {
  position: absolute;
  right: 50px;
  bottom: 8px;
  display: flex;
  align-items: center;
  gap: 8px;
  color: #fff;
  opacity: .5;
  font: 31px/62px Roboto, sans-serif;
  pointer-events: none;
}
.watermark svg { width: 54px; height: 62px; fill: none; stroke: #fff; stroke-width: 3; stroke-linejoin: round; }

/* Taskbar */
.taskbar { display: flex; height: 40px; color: #fff; background: linear-gradient(90deg, #001820, #001519 35%, #000f20 65%, #000618); }
.taskbar button { display: grid; place-items: center; }
.start { width: 48px; }
.start svg { width: 16px; height: 16px; }
.search { position: relative; display: flex; align-items: center; width: 288px; padding-left: 11px; gap: 10px; background: #f1f2f2; border: 1px solid #b8bfc2; color: #2c2f31; font-size: 14px; }
.search input { flex: 1; min-width: 0; outline: 0; }
.search input::placeholder { color: #2c2f31; opacity: 1; }
.glass { width: 17px; height: 17px; fill: none; stroke: #1f2325; stroke-width: 1.500; }
.tiger { position: absolute; right: 0; bottom: 0; width: 80px; height: 38px; }
.app { width: 48px; }
.app.gap { width: 40px; margin-right: 9px; }
.app:not(.gap) { margin-right: 7px; }
.app svg { width: 18px; height: 18px; }
.app svg.l { width: 24px; height: 24px; }
.app.active { border-bottom: 2px solid #76b9ed; }
.tray { display: flex; margin-left: auto; }
.tray button { width: 24px; }
.tray svg { width: 16px; height: 16px; fill: none; stroke: #fff; }
.tray .clock { width: 64px; align-content: center; line-height: 18px; }
.tray .note { width: 40px; }
.tray .peek { width: 5px; border-left: 1px solid #46505c; margin-left: 8px; }
```
